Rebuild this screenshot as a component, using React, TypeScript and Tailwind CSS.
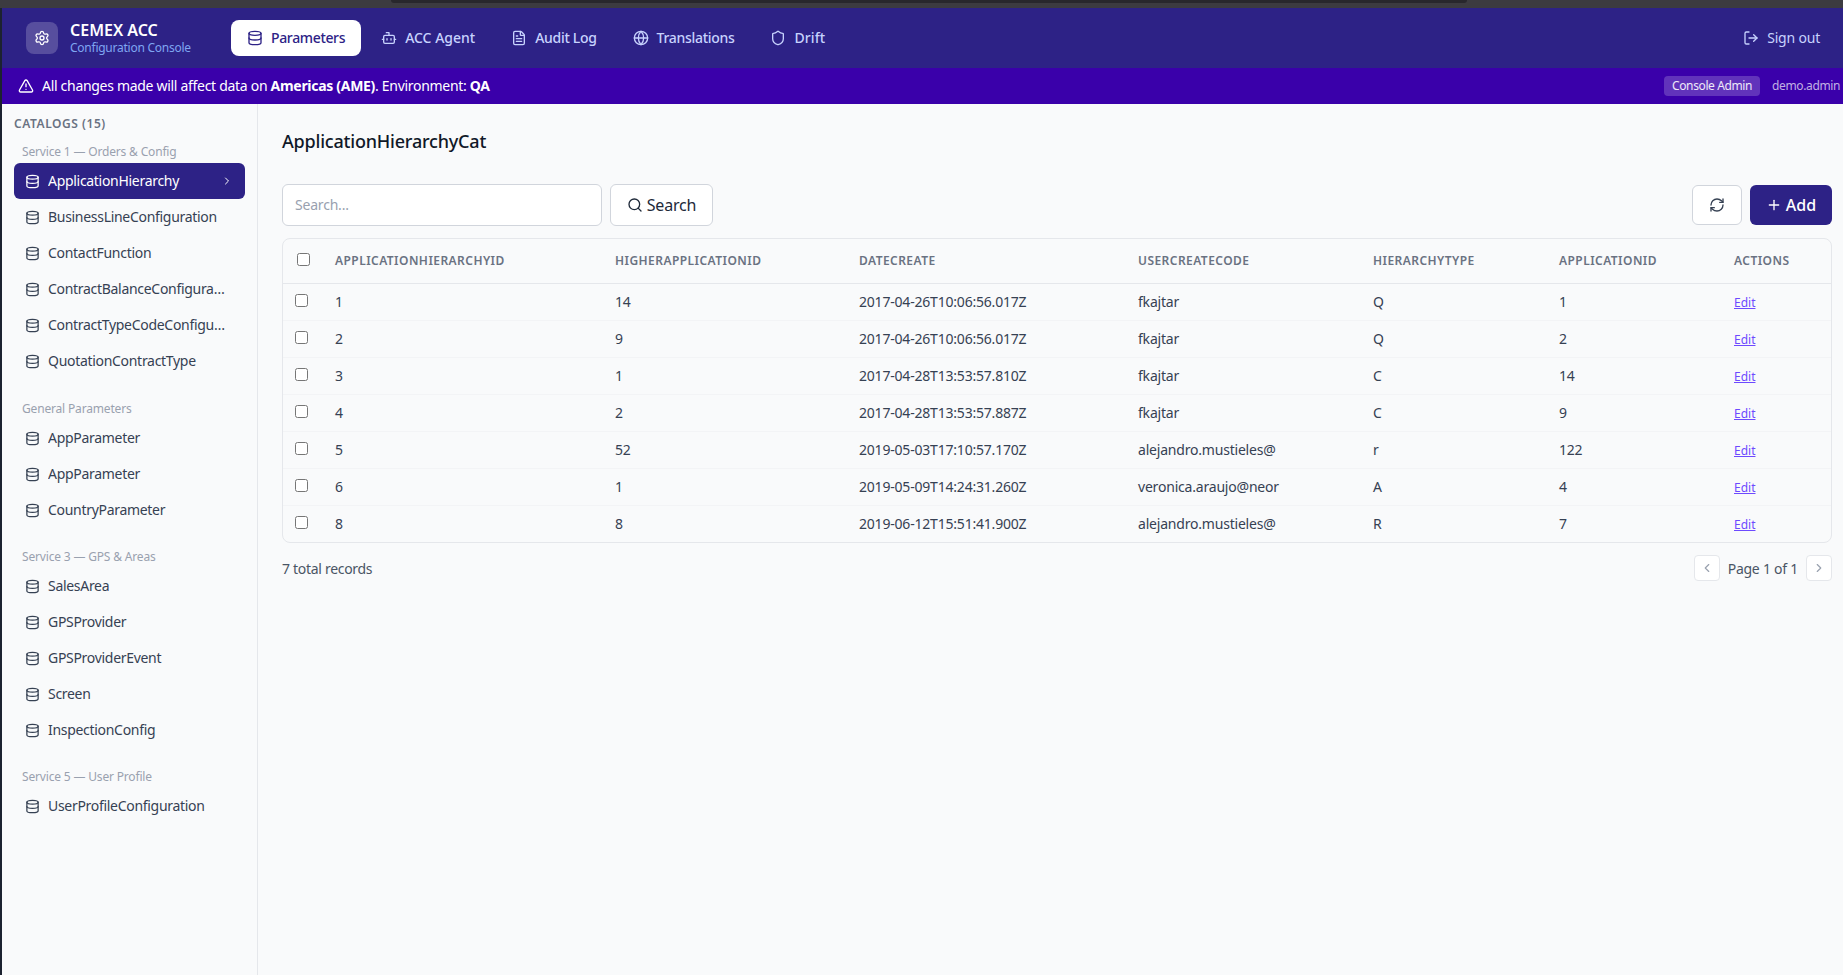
import { useState } from "react";
import {
  Bot,
  ChevronLeft,
  ChevronRight,
  Database,
  FileText,
  Globe,
  LogOut,
  Plus,
  RefreshCw,
  Search,
  Settings,
  Shield,
  TriangleAlert,
} from "lucide-react";

const navItems = [
  { label: "Parameters", icon: Database, tracking: "tracking-[-0.35px]" },
  { label: "ACC Agent", icon: Bot, tracking: "tracking-[0px]" },
  { label: "Audit Log", icon: FileText, tracking: "tracking-[-0.3px]" },
  { label: "Translations", icon: Globe, tracking: "tracking-[-0.3px]" },
  { label: "Drift", icon: Shield, tracking: "tracking-[0.1px]" },
];

const catalogGroups = [
  {
    title: "Service 1 — Orders & Config",
    items: [
      "ApplicationHierarchy",
      "BusinessLineConfiguration",
      "ContactFunction",
      "ContractBalanceConfiguration",
      "ContractTypeCodeConfiguration",
      "QuotationContractType",
    ],
  },
  { title: "General Parameters", items: ["AppParameter", "AppParameter", "CountryParameter"] },
  {
    title: "Service 3 — GPS & Areas",
    items: ["SalesArea", "GPSProvider", "GPSProviderEvent", "Screen", "InspectionConfig"],
  },
  { title: "Service 5 — User Profile", items: ["UserProfileConfiguration"] },
];

const rows = [
  ["1", "14", "2017-04-26T10:06:56.017Z", "fkajtar", "Q", "1"],
  ["2", "9", "2017-04-26T10:06:56.017Z", "fkajtar", "Q", "2"],
  ["3", "1", "2017-04-28T13:53:57.810Z", "fkajtar", "C", "14"],
  ["4", "2", "2017-04-28T13:53:57.887Z", "fkajtar", "C", "9"],
  ["5", "52", "2019-05-03T17:10:57.170Z", "alejandro.mustieles@", "r", "122"],
  ["6", "1", "2019-05-09T14:24:31.260Z", "veronica.araujo@neor", "A", "4"],
  ["8", "8", "2019-06-12T15:51:41.900Z", "alejandro.mustieles@", "R", "7"],
];

const columns = [
  "APPLICATIONHIERARCHYID",
  "HIGHERAPPLICATIONID",
  "DATECREATE",
  "USERCREATECODE",
  "HIERARCHYTYPE",
  "APPLICATIONID",
  "ACTIONS",
];

function Header() {
  return (
    <header className="h-[60px] shrink-0 bg-[#2d2286] flex items-center pl-[24px] pr-[23px]">
      <div className="w-8 h-8 rounded-lg bg-white/20 flex items-center justify-center text-white">
        <Settings size={16} />
      </div>
      <div className="ml-3 w-[161px] shrink-0 -mt-px">
        <div className="text-white text-[16px] font-semibold leading-5">CEMEX ACC</div>
        <div className="text-[#7fa6f2] text-[12px] leading-4 tracking-[-0.25px]">Configuration Console</div>
      </div>
      <nav className="flex items-center gap-1">
        {navItems.map((item, i) => {
          const Icon = item.icon;
          return (
            <button
              key={item.label}
              className={
                i === 0
                  ? "h-9 px-4 rounded-lg bg-white text-[#2d2286] flex items-center gap-2 text-[14px] font-medium"
                  : "h-9 px-4 rounded-lg text-[#c7d2fe] flex items-center gap-2 text-[14px] font-medium"
              }
            >
              <Icon size={16} />
              <span className={`-mt-0.5 ${item.tracking}`}>{item.label}</span>
            </button>
          );
        })}
      </nav>
      <button className="ml-auto flex items-center gap-2 text-[#c7d2fe] text-[14px] tracking-[-0.2px]">
        <LogOut size={16} />
        <span className="-mt-0.5">Sign out</span>
      </button>
    </header>
  );
}

function Banner() {
  return (
    <div className="h-[36px] shrink-0 bg-[#3a00aa] flex items-center pl-[16px] pr-[3px] text-white text-[14px]">
      <TriangleAlert size={16} className="mr-2" />
      <span className="-mt-0.5 tracking-[-0.3px]">
        All changes made will affect data on <strong className="font-bold">Americas (AME)</strong>. Environment:{" "}
        <strong className="font-bold">QA</strong>
      </span>
      <div className="ml-auto flex items-center gap-3 text-[12px] tracking-[-0.38px]">
        <span className="h-5 px-2 rounded bg-white/20 text-white/90 flex items-center">Console Admin</span>
        <span className="text-white/70">demo.admin</span>
      </div>
    </div>
  );
}

function Sidebar({ active, onSelect }: { active: string; onSelect: (name: string) => void }) {
  return (
    <aside className="w-[256px] shrink-0 border-r border-[#e5e7eb] px-3 pt-[12px] overflow-y-auto">
      <div className="text-[12px] leading-4 font-semibold text-gray-500 tracking-[0.55px]">CATALOGS (15)</div>
      <div className="mt-3">
        {catalogGroups.map((group) => (
          <div key={group.title} className="mb-[21px] first:mb-[22px]">
            <div className="pl-2 h-4 mt-1 mb-[3px] text-[12px] leading-4 text-gray-400 tracking-[-0.17px]">
              {group.title}
            </div>
            {group.items.map((name, i) => {
              const isActive = name === active;
              return (
                <button
                  key={name + i}
                  onClick={() => onSelect(name)}
                  className={
                    isActive
                      ? "w-full h-9 pl-[11px] pr-3 rounded-md flex items-center gap-2 text-[14px] text-left tracking-[-0.3px] bg-[#2d2286] text-white"
                      : "w-full h-9 pl-[11px] pr-[17px] rounded-md flex items-center gap-2 text-[14px] text-left tracking-[-0.3px] text-gray-700"
                  }
                >
                  <Database size={15} className="shrink-0" />
                  <span className="flex-1 truncate -mt-0.5">{name}</span>
                  {isActive && <ChevronRight size={12} className="shrink-0" />}
                </button>
              );
            })}
          </div>
        ))}
      </div>
    </aside>
  );
}

function DataTable() {
  return (
    <div className="border border-[#e5e7eb] rounded-lg overflow-hidden">
      <table className="w-full table-fixed border-collapse text-left">
        <colgroup>
          <col className="w-[40px]" />
          <col className="w-[280px]" />
          <col className="w-[244px]" />
          <col className="w-[279px]" />
          <col className="w-[235px]" />
          <col className="w-[186px]" />
          <col className="w-[175px]" />
          <col />
        </colgroup>
        <thead>
          <tr className="h-[44px] border-b border-[#e5e7eb]">
            <th className="pl-[14px]">
              <input type="checkbox" className="block w-[13px] h-[13px] -mt-[3px]" />
            </th>
            {columns.map((col) => (
              <th key={col} className="px-3 text-[12px] font-semibold text-gray-500 tracking-[0.45px]">
                {col}
              </th>
            ))}
          </tr>
        </thead>
        <tbody>
          {rows.map((row) => (
            <tr key={row[0]} className="h-[37px] border-b border-[#f3f4f6] last:border-b-0">
              <td className="pl-3">
                <input type="checkbox" className="block w-[13px] h-[13px] -mt-[2px]" />
              </td>
              {row.map((cell, i) => (
                <td
                  key={i}
                  className="px-3 pb-px text-[14px] text-gray-700 tracking-[-0.2px] whitespace-nowrap overflow-hidden"
                >
                  {cell}
                </td>
              ))}
              <td className="px-3 pb-px">
                <a href="#" className="text-[12px] text-[#6d4aff] underline">
                  Edit
                </a>
              </td>
            </tr>
          ))}
        </tbody>
      </table>
    </div>
  );
}

export default function App() {
  const [active, setActive] = useState("ApplicationHierarchy");
  const [query, setQuery] = useState("");

  return (
    <div className="h-screen w-full flex flex-col overflow-hidden bg-[#f9fafb] [font-family:'Noto_Sans',sans-serif]">
      <div className="h-2 shrink-0 bg-[#3c3b40] pl-[391px] pr-[376px]">
        <div className="h-[3px] rounded-b bg-[#28272c]" />
      </div>
      <div className="flex-1 min-h-0 flex flex-col border-l-2 border-[#1c2230]">
        <Header />
        <Banner />
        <div className="flex-1 min-h-0 flex">
          <Sidebar active={active} onSelect={setActive} />
          <main className="flex-1 min-w-0 pl-6 pr-[11px] pt-[23px]">
            <h1 className="text-[18px] leading-7 font-medium text-gray-900 tracking-[-0.2px]">
              ApplicationHierarchyCat
            </h1>
            <div className="mt-[29px] mb-[12px] flex items-center">
              <input
                value={query}
                onChange={(e) => setQuery(e.target.value)}
                placeholder="Search..."
                className="w-[320px] h-[42px] px-3 pb-0.5 rounded-md bg-white border border-gray-300 text-[14px] tracking-[-0.2px] placeholder-gray-400 outline-none"
              />
              <button className="ml-2 h-[42px] w-[103px] rounded-md bg-white border border-gray-300 flex items-center justify-center gap-1 text-[16px] text-gray-800 tracking-[-0.2px]">
                <Search size={16} />
                Search
              </button>
              <button className="ml-auto h-10 w-[50px] rounded-md bg-white border border-gray-300 flex items-center justify-center text-gray-700">
                <RefreshCw size={16} />
              </button>
              <button className="ml-2 h-10 w-[82px] rounded-md bg-[#2d2286] text-white flex items-center justify-center gap-1 text-[16px] font-medium">
                <Plus size={16} />
                Add
              </button>
            </div>
            <DataTable />
            <div className="mt-[12px] flex items-center justify-between">
              <span className="text-[14px] text-gray-600 tracking-[-0.3px]">7 total records</span>
              <div className="flex items-center gap-2 text-[14px] text-gray-600 tracking-[-0.25px]">
                <button className="w-[26px] h-[26px] rounded border border-gray-200 bg-white flex items-center justify-center text-gray-400">
                  <ChevronLeft size={14} />
                </button>
                Page 1 of 1
                <button className="w-[26px] h-[26px] rounded border border-gray-200 bg-white flex items-center justify-center text-gray-400">
                  <ChevronRight size={14} />
                </button>
              </div>
            </div>
          </main>
        </div>
      </div>
    </div>
  );
}
